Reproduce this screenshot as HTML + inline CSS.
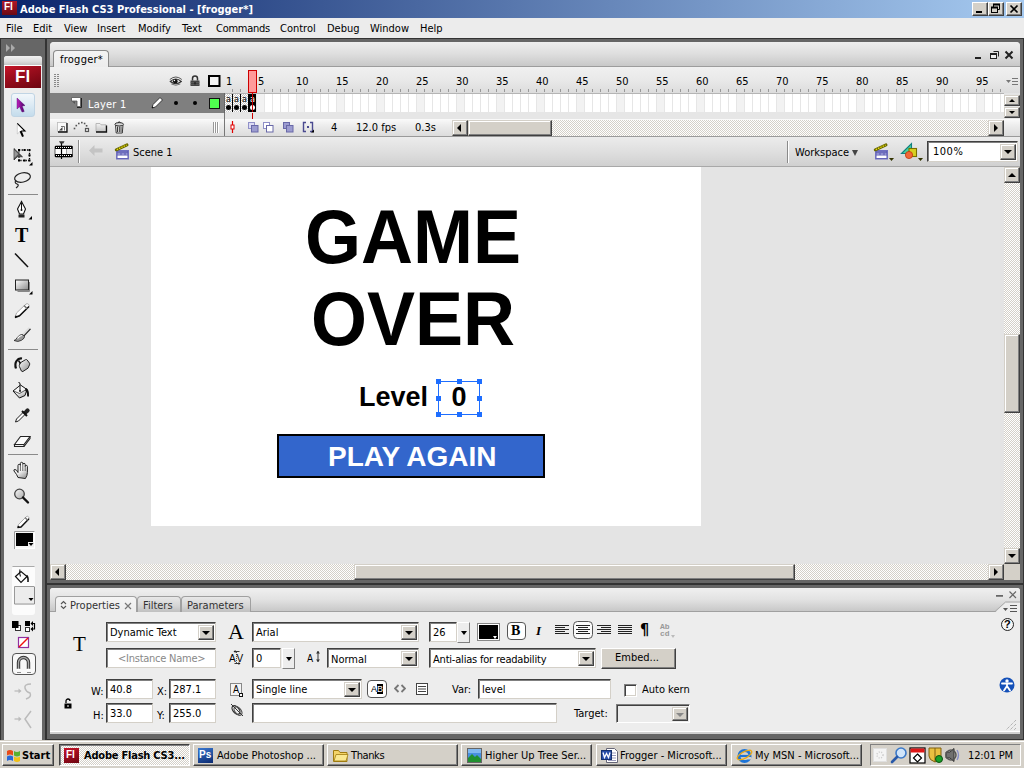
<!DOCTYPE html>
<html>
<head>
<meta charset="utf-8">
<title>Adobe Flash CS3 Professional - [frogger*]</title>
<style>
html,body{margin:0;padding:0;}
body{width:1024px;height:768px;overflow:hidden;position:relative;background:#666;
 font-family:"DejaVu Sans Condensed","Liberation Sans",sans-serif;font-size:11px;color:#000;}
.a{position:absolute;}
.t{position:absolute;white-space:nowrap;line-height:14px;}
/* title bar */
#title{left:0;top:0;width:1024px;height:18px;background:linear-gradient(to right,#0a246a,#a6caf0);}
#title .t{color:#fff;font-weight:bold;font-size:11px;left:20px;top:3px;}
.wbtn{position:absolute;top:2px;width:16px;height:14px;background:#d4d0c8;box-sizing:border-box;border:1px solid;border-color:#fff #404040 #404040 #fff;box-shadow:inset -1px -1px 0 #808080;}
/* menu */
#menu{left:0;top:18px;width:1024px;height:20px;background:#ececec;}
#menu .t{top:4px;}
/* panels */
.panel{background:#ededed;}
.grad{background:linear-gradient(to bottom,#f4f4f4 0%,#e4e4e4 55%,#cfcfcf 100%);}
.input{position:absolute;box-sizing:border-box;background:#fff;border:1px solid;border-color:#404040 #d4d0c8 #d4d0c8 #404040;box-shadow:inset 1px 1px 0 #808080;height:20px;}
.input .t{left:3px;top:3px;}
.ddbtn{position:absolute;right:1px;top:2px;bottom:1px;width:16px;background:#d4d0c8;box-sizing:border-box;border:1px solid;border-color:#d4d0c8 #404040 #404040 #d4d0c8;box-shadow:inset -1px -1px 0 #808080,inset 1px 1px 0 #fff;}
.ddbtn:after{content:"";position:absolute;left:3px;top:5px;border:4px solid transparent;border-top:4px solid #000;border-bottom:none;}
.sbtn{position:absolute;width:16px;height:16px;background:#d4d0c8;box-sizing:border-box;border:1px solid;border-color:#d4d0c8 #404040 #404040 #d4d0c8;box-shadow:inset -1px -1px 0 #808080,inset 1px 1px 0 #fff;}
.track{position:absolute;background:#e9e7e0;background-image:repeating-conic-gradient(#fff 0% 25%,#d4d0c8 0% 50%);background-size:2px 2px;}
.tri{position:absolute;width:0;height:0;border:4px solid transparent;}
.rl{top:33px;font-size:11px;}
.arial{font-family:"Liberation Sans",sans-serif;}
.h{position:absolute;width:5px;height:5px;background:#1e6eff;}
.ptab{height:16px;box-sizing:border-box;background:linear-gradient(#e8e8e8,#d4d4d4 60%,#c0c0c0);border:1px solid #a0a0a0;border-bottom:none;border-radius:4px 4px 0 0;}
.spin{position:absolute;width:13px;height:21px;box-sizing:border-box;background:#ededed;border:1px solid;border-color:#fff #808080 #808080 #fff;}
.spin:after{content:"";position:absolute;left:3px;top:8px;border:3px solid transparent;border-top:4px solid #000;border-bottom:none;}
.ddbtn.dis:after{border-top-color:#888;}
.tb{position:absolute;top:3px;width:131px;height:22px;box-sizing:border-box;background:#d4d0c8;border:1px solid;border-color:#fff #404040 #404040 #fff;box-shadow:inset -1px -1px 0 #808080;overflow:hidden;}
.tb.act{background:#fff;background-image:repeating-conic-gradient(#fff 0% 25%,#d4d0c8 0% 50%);background-size:2px 2px;border-color:#404040 #fff #fff #404040;box-shadow:inset 1px 1px 0 #808080;}
</style>
</head>
<body>
<!-- TITLE BAR -->
<div id="title" class="a">
  <div class="a" style="left:2px;top:1px;width:15px;height:14px;background:linear-gradient(#b01828,#6c0a14);"></div>
  <div class="t" style="left:4px;top:0px;font-size:10px;font-weight:bold;color:#fff;font-family:'Liberation Sans',sans-serif;">Fl</div>
  <div class="t">Adobe Flash CS3 Professional - [frogger*]</div>
  <div class="wbtn" style="left:972px;"><div class="a" style="left:3px;top:8px;width:6px;height:2px;background:#000;"></div></div>
  <div class="wbtn" style="left:988px;"><svg class="a" style="left:0;top:0;" width="14" height="12" viewBox="0 0 14 12"><path d="M4.500 4v-2.500h6v5h-2" fill="none" stroke="#000"/><path d="M4 1.500h7" stroke="#000" stroke-width="2"/><rect x="2.500" y="4.500" width="6" height="5" fill="none" stroke="#000"/><path d="M2 4.500h7" stroke="#000" stroke-width="2"/></svg></div>
  <div class="wbtn" style="left:1006px;"><svg class="a" style="left:0;top:0;" width="14" height="12" viewBox="0 0 14 12"><path d="M3.500 2.500l7 7M10.500 2.500l-7 7" stroke="#000" stroke-width="1.700"/></svg></div>
</div>
<!-- MENU -->
<div id="menu" class="a">
  <div class="t" style="left:6px;">File</div>
  <div class="t" style="left:33px;">Edit</div>
  <div class="t" style="left:64px;">View</div>
  <div class="t" style="left:97px;">Insert</div>
  <div class="t" style="left:138px;">Modify</div>
  <div class="t" style="left:182px;">Text</div>
  <div class="t" style="left:216px;letter-spacing:-.25px;">Commands</div>
  <div class="t" style="left:280px;">Control</div>
  <div class="t" style="left:327px;">Debug</div>
  <div class="t" style="left:370px;">Window</div>
  <div class="t" style="left:420px;">Help</div>
</div>
<!-- TOOLBAR -->
<div id="tools" class="a panel" style="left:4px;top:56px;width:38px;height:684px;border-radius:3px 3px 0 0;overflow:hidden;">
  <div class="a" style="left:0;top:0;width:38px;height:9px;background:linear-gradient(#f2f2f2,#dcdcdc 60%,#c4c4c4);"></div>
  <div class="a" style="left:0;top:9px;width:38px;height:1px;background:#fff;"></div>
  <div class="a" style="left:1px;top:10px;width:36px;height:22px;background:linear-gradient(160deg,#c81428 0%,#a00e1e 35%,#6c0410 100%);"></div>
  <div class="t" style="left:11px;top:10px;font-family:'Liberation Sans',sans-serif;font-weight:bold;font-size:17px;line-height:22px;color:#fff;letter-spacing:0px;">Fl</div>
  <div class="a" style="left:7px;top:37px;width:24px;height:24px;box-sizing:border-box;border:1px solid #c0d4e4;border-radius:3px;background:linear-gradient(#f2f7fb,#dceaf4 50%,#c4dcec);"></div>
  <svg class="a" style="left:0;top:0;" width="38" height="684" viewBox="4 56 38 684">
    <defs>
      <linearGradient id="gm" x1="0" y1="0" x2="1" y2="1"><stop offset="0" stop-color="#fff"/><stop offset="1" stop-color="#8a8a8a"/></linearGradient>
      <linearGradient id="gl" x1="0" y1="0" x2=".6" y2="1"><stop offset="0" stop-color="#fff"/><stop offset=".6" stop-color="#f4f4f4"/><stop offset="1" stop-color="#aaa"/></linearGradient>
      <linearGradient id="gz" x1="0" y1="0" x2="1" y2="1"><stop offset="0" stop-color="#f8f8f8"/><stop offset="1" stop-color="#a8a8a8"/></linearGradient>
      <linearGradient id="gp" x1="0" y1="0" x2="1" y2="0"><stop offset="0" stop-color="#c020c0"/><stop offset="1" stop-color="#400060"/></linearGradient>
    </defs>
    <!-- selection arrow -->
    <path d="M17 98v11l2.500-2.300 2.500 5.300 2.200-.5-2-5.500 2.800-.5z" fill="url(#gp)" stroke="#500070" stroke-width=".4"/>
    <!-- subselection -->
    <path d="M17.300 123.500v10.500l2.700-2.500 5-.5z" fill="#fff" stroke="#aaa" stroke-width=".5"/><path d="M17.300 123.300l7.700 7.700h-3.500" fill="none" stroke="#000" stroke-width="1.100"/><path d="M20.600 131l2.400 5.600" stroke="#000" stroke-width="2"/>
    <!-- free transform -->
    <rect x="19" y="150" width="10.500" height="10.500" fill="none" stroke="#000" stroke-width="1.300" stroke-dasharray="1.300 1.330"/>
    <path d="M18 149h2v2h-2zM23.500 149h2v2h-2zM28.500 149h2v2h-2zM28.500 154.300h2v2h-2zM28.500 159.500h2v2h-2zM23.500 159.500h2v2h-2zM18 159.500h2v2h-2z" fill="#000"/>
    <path d="M14 148.500v11.500l3.200-3.200h5.300z" fill="#555" stroke="#111" stroke-width=".6"/><path d="M14.300 150v8l4-4z" fill="#999"/>
    <path d="M32.500 162v3.500h-3.500z" fill="#000"/>
    <!-- lasso -->
    <ellipse cx="22.500" cy="177.500" rx="8" ry="4.600" transform="rotate(-12 22.500 177.500)" fill="none" stroke="#222" stroke-width="1.200"/>
    <path d="M16 180q-2 3 1 4t-1 4" fill="none" stroke="#222" stroke-width="1.100"/>
    <!-- separators -->
    <path d="M8 194.500h30M8 349.500h30M8 454.500h30" stroke="#8a8a8a"/>
    <!-- pen -->
    <path d="M21.500 201.500l-4 7.500 2 5h4l2-5z" fill="#fff" stroke="#111" stroke-width="1.100"/><path d="M21.500 203v7" stroke="#111"/><circle cx="21.500" cy="210" r="1" fill="#111"/>
    <path d="M18.500 214.500h6v3h-6z" fill="#222"/><path d="M32 216v3.500h-3.500z" fill="#000"/>
    <!-- line -->
    <path d="M15 253.500l13 13.500" stroke="#111" stroke-width="1.500"/>
    <!-- rectangle -->
    <rect x="15.500" y="280" width="13" height="10" fill="url(#gm)" stroke="#222"/><path d="M29.500 282v9.500h-12" fill="none" stroke="#888"/><path d="M32.500 291v3.500h-3.500z" fill="#000"/>
    <!-- pencil -->
    <path d="M15 317.500l1.500-4.500 9.500-9q1.500-.8 2.500.3t.4 2.500l-9.400 9z" fill="#fff" stroke="#999" stroke-width=".8"/>
    <path d="M29 306.500l-9.500 9.300-4.500 1.700" fill="none" stroke="#111" stroke-width="1.500"/><path d="M15 317.500l2.200-.7-1.400-1.600z" fill="#000"/><path d="M24 305.500l3.200 3.200" stroke="#777" stroke-width="1.600"/>
    <!-- brush -->
    <path d="M29.500 328l-7 7.500" stroke="#ddd" stroke-width="2.200"/><path d="M30.500 328.800l-7 7.500" stroke="#222" stroke-width="1.200"/>
    <path d="M22.500 334.500q-3-.3-5 2.800t-3.500 3.200q4 2 7.500-.2t3-4z" fill="#999" stroke="#222" stroke-width=".8"/><path d="M17.500 338.500q2-3 4.500-3" fill="none" stroke="#fff" stroke-width="1.200"/>
    <path d="M8 349.500h30" stroke="#8a8a8a"/>
    <!-- ink bottle -->
    <path d="M20 363l5.500-3.300q1-.5 1.700.3l2.300 3.200q.5.800 0 1.700l-1.500 3.300-5 3.200q-1 .5-1.600-.4l-2-4.500q-.4-1 .4-2.500z" fill="url(#gm)" stroke="#222" stroke-width="1"/>
    <path d="M16 368.500q-1.500-4.500.5-7.500t5.500-2.500" fill="none" stroke="#111" stroke-width="2.200"/><path d="M18.500 360.500l2 3" stroke="#111" stroke-width="1.500"/>
    <!-- paint bucket -->
    <path d="M13 391l7.500-6 6.500 4.500-2 6-5.500 2.500z" fill="url(#gl)" stroke="#111" stroke-width="1"/><path d="M13.500 391l6 2.500 7-4" fill="none" stroke="#333" stroke-width=".8"/>
    <path d="M20 391v-7q0-1.800-1.500-1.500" fill="none" stroke="#111" stroke-width="1"/><circle cx="20" cy="391" r=".9" fill="#111"/>
    <path d="M26 388q3.500 1.500 3 8.500h-1.800q.3-4-2.200-6.500z" fill="#111"/>
    <!-- eyedropper -->
    <path d="M15.500 422l1-3 7.500-7.500 2 2-7.500 7.500z" fill="#fafafa" stroke="#222" stroke-width="1"/><path d="M23 412.500l3-3.500q1.500-1.500 3 0t0 3l-3.500 3z" fill="#222"/><path d="M22 411l5 5" stroke="#111" stroke-width="2"/>
    <!-- eraser -->
    <path d="M14.500 444.500l6-8h9.500l-6 8z" fill="#fafafa" stroke="#222" stroke-width="1.100"/><path d="M14.500 444.500v2h9.500l6-8v-2" fill="none" stroke="#222" stroke-width="1.100"/><path d="M24 444.500v2" stroke="#222"/>
    <!-- hand -->
    <path d="M18 477.500q-1-3-4-6.500q-.6-1.500 1-1.500t3 3v-7q0-1.200 1.200-1.200t1.200 1.200v-2q0-1.200 1.200-1.200t1.200 1.200v1q0-1.200 1.200-1.200t1.200 1.200v2q0-1.100 1.100-1.100t1.100 1.100v6q0 3-2 6z" fill="url(#gl)" stroke="#222" stroke-width="1"/>
    <path d="M20.400 466v5M22.800 465v6M25.200 466.500v4.500" stroke="#444" stroke-width=".8"/>
    <!-- zoom -->
    <circle cx="19.500" cy="494" r="4.800" fill="url(#gz)" stroke="#444" stroke-width="1.300"/><path d="M23 497.500l5 5" stroke="#111" stroke-width="2.400" stroke-linecap="round"/>
    <!-- stroke pencil -->
    <path d="M17.500 527.500l1-3 8-8q1.200-.6 2 .3t.4 2.200l-8 8z" fill="#fff" stroke="#999" stroke-width=".8"/><path d="M29 518.700l-8 8.300-3.500.5" fill="none" stroke="#111" stroke-width="1.400"/><path d="M17.500 527.500l2-.5-1.500-1.500z" fill="#000"/><path d="M25 517.500l2.700 2.700" stroke="#777" stroke-width="1.400"/>
    <!-- stroke swatch -->
    <rect x="14.500" y="531.500" width="20" height="17" fill="#f8f8f8" stroke="#fff"/><path d="M14.500 549v-17.500h20" fill="none" stroke="#999"/>
    <rect x="16" y="533" width="17" height="13" fill="#000"/><rect x="28" y="542" width="6" height="5" fill="#f0f0f0"/><path d="M28.500 543h5l-2.500 3z" fill="#000"/>
    <!-- fill area -->
    <rect x="12" y="566" width="23" height="49" rx="3" fill="#fcfcfc"/><path d="M12.500 566.500h22" stroke="#aaa"/>
    <path d="M15.500 576.500l5.500-5 6 5-6 6z" fill="#fff" stroke="#111" stroke-width="1.200"/><path d="M20 569.500q-1 3 .5 7" fill="none" stroke="#111" stroke-width="1.100"/><path d="M26.500 575.500q2 1.500 1.500 6.500" fill="none" stroke="#111" stroke-width="1.600"/>
    <rect x="14.500" y="586.500" width="20" height="17" fill="#ececec" stroke="#fff"/><path d="M14.500 604v-17.500h20" fill="none" stroke="#999"/><path d="M34.500 587v17h-20" fill="none" stroke="#888"/>
    <path d="M28.500 598h5l-2.500 3z" fill="#000"/>
    <!-- b/w, swap -->
    <rect x="15.500" y="625.500" width="5" height="5" fill="#fff" stroke="#333"/><rect x="12" y="621" width="6.500" height="7" fill="#000"/>
    <rect x="25" y="621" width="5" height="5" fill="#000"/><rect x="25.500" y="627.500" width="4" height="4" fill="#fff" stroke="#333"/>
    <path d="M31.500 623.500h3v5.500h-3" fill="none" stroke="#000" stroke-width="1.200"/><path d="M33 621l-2.500 2.500 2.500 2.500zM33 626.500l-2.500 2.500 2.500 2.500z" fill="#000"/>
    <!-- no color -->
    <rect x="18.500" y="637.500" width="10" height="10" fill="#fff" stroke="#9030a0" stroke-width="1.200"/><path d="M19 647l9-9" stroke="#f01010" stroke-width="1.500"/>
    <!-- magnet button -->
    <rect x="12.500" y="653.500" width="23" height="21" rx="3.500" fill="#f8f8f8" stroke="#555"/>
    <path d="M18.500 669v-6.500a5 5 0 0 1 10 0v6.500" fill="none" stroke="#333" stroke-width="3.400"/><path d="M18.500 669v-6.500a5 5 0 0 1 10 0v6.500" fill="none" stroke="#aaa" stroke-width="1.400"/>
    <path d="M16.800 669.500h3.400M26.800 669.500h3.400" stroke="#fff" stroke-width="1.500"/><path d="M17.500 672.500h1M19.500 672.500h1M27.500 672.500h1M29.500 672.500h1" stroke="#222"/>
    <!-- smooth -->
    <path d="M14.500 691h6" stroke="#bbb" stroke-width="1.300"/><path d="M18.500 688.500l3 2.500-3 2.500z" fill="#bbb"/><path d="M31 684q-7 0-6 4t5 5q2 4-4 6" fill="none" stroke="#bbb" stroke-width="1.500"/>
    <!-- straighten -->
    <path d="M14.500 719h6" stroke="#bbb" stroke-width="1.300"/><path d="M18.500 716.500l3 2.500-3 2.500z" fill="#bbb"/><path d="M31 711l-6 8 6 9" fill="none" stroke="#bbb" stroke-width="1.500"/>
  </svg>
  <div class="t" style="left:11px;top:168px;font-family:'Liberation Serif',serif;font-weight:bold;font-size:20px;line-height:22px;">T</div>
</div>
<!-- dock chrome -->
<svg class="a" style="left:6px;top:44px;" width="10" height="8" viewBox="0 0 10 8"><path d="M0 0l4 4-4 4zM5 0l4 4-4 4z" fill="#aaa"/></svg>
<div class="a" style="left:0;top:38px;width:1024px;height:1px;background:#333;"></div>
<div class="a" style="left:0;top:38px;width:1px;height:702px;background:#333;"></div>
<div class="a" style="left:45px;top:39px;width:2px;height:701px;background:#333;"></div>
<div class="a" style="left:1023px;top:38px;width:1px;height:702px;background:#333;"></div>
<div class="a" style="left:47px;top:583px;width:976px;height:2px;background:#333;"></div>
<div class="a" style="left:47px;top:739px;width:976px;height:1px;background:#333;"></div>
<!-- DOC WINDOW -->
<div id="doc" class="a" style="left:50px;top:42px;width:970px;height:538px;background:#e4e4e4;border-radius:4px 4px 0 0;overflow:hidden;">
  <!-- tab bar -->
  <div class="a" style="left:0;top:0;width:970px;height:24px;background:linear-gradient(#eeeeee,#dedede 50%,#c8c8c8);border-bottom:1px solid #9c9c9c;"></div>
  <div class="a" style="left:3px;top:8px;width:56px;height:17px;box-sizing:border-box;background:linear-gradient(#f4f4f4,#ececec);border:1px solid #8a8a8a;border-bottom:none;border-radius:4px 4px 0 0;"></div>
  <div class="t" style="left:10px;top:11px;letter-spacing:.25px;">frogger*</div>
  <!-- doc window controls -->
  <svg class="a" style="left:920px;top:6px;" width="48" height="14" viewBox="0 0 48 14">
    <rect x="5" y="9" width="6" height="2" fill="#222"/>
    <path d="M23.5 3.500h5v5" fill="none" stroke="#222" stroke-width="1"/><rect x="20.500" y="5.500" width="6" height="5" fill="#eee" stroke="#222"/><rect x="20" y="5" width="7" height="2" fill="#222"/>
    <path d="M35.500 3.500l7 7M42.500 3.500l-7 7" stroke="#222" stroke-width="2"/>
  </svg>
  <!-- timeline header -->
  <div class="a" style="left:0;top:25px;width:970px;height:26px;background:linear-gradient(#f0f0f0,#e9e9e9 50%,#dcdcdc);"></div>
  <div class="a" style="left:4px;top:32px;width:2px;height:14px;background:repeating-linear-gradient(#888 0 1px,transparent 1px 2px);"></div>
  <div class="a" style="left:7px;top:32px;width:2px;height:14px;background:repeating-linear-gradient(#888 0 1px,transparent 1px 2px);"></div>
  <!-- eye, lock, outline icons -->
  <svg class="a" style="left:118px;top:32px;" width="54" height="15" viewBox="0 0 54 15">
    <g transform="translate(1.300 1.500)"><path d="M1 6Q6.500 1 12 6Q6.500 10.500 1 6z" fill="#e4e4e4" stroke="#333" stroke-width="1.100"/><circle cx="6" cy="5.800" r="2.300" fill="#111"/><circle cx="5.200" cy="5" r=".7" fill="#fff"/>
    <path d="M.5 4Q6.500 -1 12.500 4" fill="none" stroke="#555" stroke-width="1"/><path d="M2 8.500Q6.500 11 11 8.500" fill="none" stroke="#555" stroke-width=".8"/></g>
    <path d="M24.500 6.500v-2a2.500 2.500 0 0 1 5 0v2" fill="none" stroke="#333" stroke-width="1.500"/><rect x="22.500" y="6.500" width="9" height="5.500" fill="#444"/><path d="M22.500 8.500h9M22.500 10.500h9" stroke="#666" stroke-width=".6"/><rect x="26.500" y="8" width="1" height="2.500" fill="#111"/>
    <rect x="41" y="2" width="10.500" height="10" fill="#f4f4f4" stroke="#000" stroke-width="2"/>
  </svg>
  <!-- ruler -->
  <div class="t rl" style="left:176px;">1</div><div class="t rl" style="left:208px;">5</div><div class="t rl" style="left:246px;">10</div><div class="t rl" style="left:286px;">15</div><div class="t rl" style="left:326px;">20</div><div class="t rl" style="left:366px;">25</div><div class="t rl" style="left:406px;">30</div><div class="t rl" style="left:446px;">35</div><div class="t rl" style="left:486px;">40</div><div class="t rl" style="left:526px;">45</div><div class="t rl" style="left:566px;">50</div><div class="t rl" style="left:606px;">55</div><div class="t rl" style="left:646px;">60</div><div class="t rl" style="left:686px;">65</div><div class="t rl" style="left:726px;">70</div><div class="t rl" style="left:766px;">75</div><div class="t rl" style="left:806px;">80</div><div class="t rl" style="left:846px;">85</div><div class="t rl" style="left:886px;">90</div><div class="t rl" style="left:926px;">95</div>
  <div class="a" style="left:175px;top:47px;width:779px;height:3px;background:repeating-linear-gradient(to right,transparent 0 7px,#999 7px 8px);"></div>
  <div class="a" style="left:175px;top:51px;width:779px;height:1px;background:#b4b4b4;"></div>
  <!-- playhead -->
  <div class="a" style="left:198px;top:28px;width:9px;height:23px;box-sizing:border-box;background:#ff9a9a;border:1px solid #cc0000;"></div>
  <!-- layer row -->
  <div class="a" style="left:0;top:51px;width:174px;height:20px;background:#7f7f7f;"></div>
  <svg class="a" style="left:21px;top:55px;" width="12" height="12" viewBox="0 0 12 12"><path d="M.5 .5h9v9h-3.500v-5.500h-5.500z" fill="#fff" stroke="#555" stroke-width=".8"/><path d="M10.500 1v9.500h-4.500" stroke="#222" fill="none"/><path d="M1 4.500l3 2.500v-2.500z" fill="#555"/></svg>
  <div class="t" style="left:38px;top:56px;color:#fff;letter-spacing:.2px;">Layer 1</div>
  <svg class="a" style="left:100px;top:54px;" width="14" height="14" viewBox="0 0 14 14"><path d="M2 12l1-3.500 7-7 2.500 2.500-7 7z" fill="#fff" stroke="#333" stroke-width="1"/><path d="M2 12l1.500-.4-1-1z" fill="#000"/></svg>
  <div class="a" style="left:124px;top:59px;width:4px;height:4px;border-radius:2px;background:#000;"></div>
  <div class="a" style="left:143px;top:59px;width:4px;height:4px;border-radius:2px;background:#000;"></div>
  <div class="a" style="left:159px;top:56px;width:11px;height:11px;box-sizing:border-box;background:#4fff4f;border:1px solid #111;"></div>
  <div class="a" style="left:174px;top:51px;width:1px;height:43px;background:#666;"></div>
  <!-- frames -->
  <div class="a" style="left:175px;top:52px;width:779px;height:18px;background:#fff;background-image:repeating-linear-gradient(to right,transparent 0 7px,#e6e6e6 7px 8px),repeating-linear-gradient(to right,transparent 0 32px,#f2f2f2 32px 40px);"></div>
  <div class="a" style="left:175px;top:52px;width:24px;height:19px;box-sizing:border-box;border-bottom:1px solid #000;background:#fff;background-image:repeating-conic-gradient(#fff 0% 25%,#c8c8c8 0% 50%);background-size:2px 2px;"></div>
  <div class="a" style="left:198px;top:52px;width:8px;height:19px;background:#000;"></div>
  <div class="a" style="left:182px;top:52px;width:1px;height:19px;background:#000;"></div>
  <div class="a" style="left:190px;top:52px;width:1px;height:19px;background:#000;"></div>
  <div class="a" style="left:198px;top:52px;width:1px;height:19px;background:#000;"></div>
  <div class="t" style="left:176px;top:51px;font-size:9px;line-height:12px;">a</div>
  <div class="t" style="left:184px;top:51px;font-size:9px;line-height:12px;">a</div>
  <div class="t" style="left:192px;top:51px;font-size:9px;line-height:12px;">a</div>
  <div class="t" style="left:200px;top:51px;font-size:9px;line-height:12px;color:#fff;">a</div>
  <div class="a" style="left:176px;top:63px;width:5px;height:5px;border-radius:3px;background:#000;"></div>
  <div class="a" style="left:184px;top:63px;width:5px;height:5px;border-radius:3px;background:#000;"></div>
  <div class="a" style="left:192px;top:63px;width:5px;height:5px;border-radius:3px;background:#000;"></div>
  <div class="a" style="left:200px;top:63px;width:5px;height:5px;border-radius:3px;background:#fff;"></div>
  <div class="a" style="left:202px;top:51px;width:1px;height:26px;background:#cc0000;"></div>
  <!-- timeline v scroll -->
  <div class="a" style="left:954px;top:51px;width:16px;height:26px;background:#e4e4e4;"></div>
  <div class="sbtn" style="left:954px;top:53px;height:11px;z-index:2;"><div class="tri" style="left:4px;top:0px;border-width:3px;border-bottom-color:#000;"></div></div>
  <div class="sbtn" style="left:954px;top:65px;height:11px;z-index:2;"><div class="tri" style="left:4px;top:3px;border-width:3px;border-top-color:#000;"></div></div>
  <svg class="a" style="left:954px;top:35px;" width="16" height="9" viewBox="0 0 16 9"><path d="M2 3h5l-2.500 3z" fill="#777"/><path d="M8 1.500h6M8 4.500h6M8 7.500h6" stroke="#777"/></svg>
  <!-- gap + bottom row -->
  <div class="a" style="left:175px;top:70px;width:795px;height:7px;background:#e6e6e6;"></div><div class="a" style="left:0;top:71px;width:175px;height:6px;background:#e9e9e9;"></div>
  <div class="a" style="left:0;top:77px;width:970px;height:17px;background:linear-gradient(#fafafa,#ececec 40%,#dcdcdc);"></div>
  <div class="a" style="left:0;top:94px;width:970px;height:1px;background:#9a9a9a;"></div>
  <div class="a" style="left:174px;top:71px;width:1px;height:23px;background:#777;"></div>
  <div class="a" style="left:202px;top:71px;width:1px;height:6px;background:#cc0000;"></div>
  <!-- layer bottom icons -->
  <svg class="a" style="left:6px;top:79px;" width="72" height="14" viewBox="0 0 72 14">
    <rect x="1.500" y="1.500" width="9" height="9" fill="#fafafa" stroke="#bbb" stroke-width=".8"/><path d="M11 2v9h-9" stroke="#111" stroke-width="1.300" fill="none"/><path d="M3 9.500l3.500-3.500v3.500z" fill="#444"/><path d="M5 5.500h3.500v4" fill="none" stroke="#666" stroke-width=".9"/>
    <rect x="17.7" y="6.7" width="1.600" height="1.600" fill="#555"/><rect x="19.5" y="3.8" width="1.600" height="1.600" fill="#555"/><rect x="22.0" y="1.7" width="1.600" height="1.600" fill="#555"/><rect x="25.0" y="0.8" width="1.600" height="1.600" fill="#555"/><rect x="27.8" y="1.7" width="1.600" height="1.600" fill="#555"/><rect x="29.8" y="4.0" width="1.600" height="1.600" fill="#555"/><rect x="29.500" y="7.500" width="3" height="3" fill="#eee" stroke="#555" stroke-width="1.200"/>
    <path d="M40 10.500v-8h4l1 1.300h5v6.700z" fill="url(#gf)" stroke="#aaa" stroke-width=".8"/><path d="M50.500 4.500v6.500h-10.500" stroke="#111" stroke-width="1.300" fill="none"/>
    <path d="M59.500 4h7.500l-.7 8h-6.100z" fill="#f4f4f4" stroke="#222" stroke-width=".9"/><ellipse cx="63.200" cy="3.300" rx="4.300" ry="1.700" fill="#d8d8d8" stroke="#222" stroke-width=".9"/><path d="M61.500 5.500v5.500M63.300 5.500v5.500M65 5.500v5.500" stroke="#222" stroke-width=".9"/><path d="M62 1.500q1.200-1.200 2.500 0" fill="none" stroke="#222" stroke-width=".9"/>
    <defs><linearGradient id="gf" x1="0" y1="0" x2="0" y2="1"><stop offset="0" stop-color="#f4f4f4"/><stop offset="1" stop-color="#c4c4c4"/></linearGradient></defs>
  </svg>
  <div class="a" style="left:163px;top:80px;width:6px;height:11px;background:repeating-linear-gradient(to right,#999 0 1px,#fff 1px 2px);"></div>
  <!-- onion icons -->
  <svg class="a" style="left:178px;top:78px;" width="90" height="16" viewBox="0 0 90 16">
    <path d="M4.500 1v12" stroke="#e00000" stroke-width="1.200"/><rect x="3" y="5" width="3" height="4" fill="#fff" stroke="#e00000"/>
    <rect x="20.500" y="2.500" width="6" height="6" fill="#dcdcf4" stroke="#9090c8"/><rect x="23.500" y="5.500" width="6.500" height="6.500" fill="#9c9cd0" stroke="#6868a8"/>
    <rect x="35.500" y="2.500" width="6" height="6" fill="#fff" stroke="#9090c8"/><rect x="38.500" y="5.500" width="6.500" height="6.500" fill="#fff" stroke="#6868a8"/>
    <rect x="55.500" y="2.500" width="6" height="6" fill="#9c9cd0" stroke="#6868a8"/><rect x="58.500" y="5.500" width="6.500" height="6.500" fill="#9c9cd0" stroke="#6868a8"/>
    <path d="M78 2.500h-2.500v9h2.500M82 2.500h2.500v9h-2.500" fill="none" stroke="#4a4a90" stroke-width="1.400"/><rect x="79" y="6" width="2" height="2" fill="#4a4a90"/><path d="M86 12.500v-3l-3 3z" fill="#000"/>
  </svg>
  <div class="t" style="left:281px;top:79px;">4</div>
  <div class="t" style="left:306px;top:79px;">12.0 fps</div>
  <div class="t" style="left:365px;top:79px;">0.3s</div>
  <!-- timeline h scroll -->
  <div class="track" style="left:402px;top:78px;width:552px;height:16px;"></div>
  <div class="sbtn" style="left:402px;top:78px;"><div class="tri" style="left:0px;top:3px;border-right-color:#000;"></div></div>
  <div class="sbtn" style="left:418px;top:78px;width:84px;"></div>
  <div class="sbtn" style="left:938px;top:78px;"><div class="tri" style="left:5px;top:3px;border-left-color:#000;"></div></div>
  <!-- edit bar -->
  <div class="a" style="left:0;top:95px;width:970px;height:29px;background:linear-gradient(#ececec,#dfdfdf 50%,#d0d0d0);"></div>
  <div class="a" style="left:0;top:124px;width:970px;height:1px;background:#a8a8a8;"></div>
  <svg class="a" style="left:4px;top:98px;" width="20" height="20" viewBox="0 0 20 20">
    <rect x="1" y="6" width="17.500" height="11" rx="1" fill="#fff" stroke="#000" stroke-width=".6"/><rect x="1" y="6" width="17.500" height="3" fill="#000"/><rect x="1" y="14" width="17.500" height="3" fill="#000"/>
    <path d="M2 7.500h16M2 15.500h16" stroke="#fff" stroke-width="1" stroke-dasharray="1 1"/><path d="M12.500 9v5" stroke="#888" stroke-width=".8"/><rect x="13" y="9.200" width="5" height="4.600" fill="#ececec"/>
    <path d="M7.500 2v17" stroke="#000" stroke-width="1.200"/><path d="M5 1.200h5.500l-1.200 2.300h-3z" fill="#333"/>
  </svg>
  <div class="a" style="left:28px;top:98px;width:1px;height:23px;background:#8a8a8a;"></div><div class="a" style="left:29px;top:98px;width:1px;height:23px;background:#fff;"></div>
  <svg class="a" style="left:39px;top:103px;" width="14" height="11" viewBox="0 0 14 11"><path d="M0 5.500l5.500-5.500v3.500h8v4h-8v3.500z" fill="#c4c4c4"/></svg>
  <svg class="a" style="left:64px;top:100px;" width="17" height="18" viewBox="0 0 17 18">
    <rect x="2.500" y="8.500" width="12" height="8.500" fill="#5858b0" stroke="#7070c0" stroke-width="1"/><path d="M3.500 10h10" stroke="#9090d0" stroke-width=".8"/><path d="M3.500 12h10" stroke="#c8c8f0" stroke-width="1" stroke-dasharray="3 1"/><rect x="3.500" y="13.500" width="10" height="2.500" fill="#fff"/>
    <path d="M2.300 7.800l10.700-5" stroke="#6a6a00" stroke-width="3" stroke-linecap="round"/><path d="M2.800 7.600l9.800-4.600" stroke="#f0e010" stroke-width="1.300" stroke-dasharray="1.400 1.100"/>
  </svg>
  <div class="t" style="left:83px;top:104px;">Scene 1</div>
  <!-- right of edit bar -->
  <div class="a" style="left:737px;top:99px;width:1px;height:22px;background:#8a8a8a;"></div><div class="a" style="left:738px;top:99px;width:1px;height:22px;background:#fff;"></div>
  <div class="t" style="left:745px;top:104px;">Workspace</div>
  <div class="tri" style="left:802px;top:108px;border-top-color:#444;border-width:6px 3.500px 0 3.500px;"></div>
  <svg class="a" style="left:823px;top:100px;" width="22" height="19" viewBox="0 0 22 19">
    <rect x="2.500" y="8.500" width="12" height="8.500" fill="#5858b0" stroke="#7070c0" stroke-width="1"/><path d="M3.500 10h10" stroke="#9090d0" stroke-width=".8"/><path d="M3.500 12h10" stroke="#c8c8f0" stroke-width="1" stroke-dasharray="3 1"/><rect x="3.500" y="13.500" width="10" height="2.500" fill="#fff"/>
    <path d="M2.300 7.800l10.700-5" stroke="#6a6a00" stroke-width="3" stroke-linecap="round"/><path d="M2.800 7.600l9.800-4.600" stroke="#f0e010" stroke-width="1.300" stroke-dasharray="1.400 1.100"/><path d="M16 16h5l-2.500 3z" fill="#333300"/>
  </svg>
  <svg class="a" style="left:850px;top:100px;" width="24" height="19" viewBox="0 0 24 19">
    <path d="M1.500 11.500l10-10v10z" fill="#48d0a0" stroke="#108080" stroke-width="1.100"/><rect x="9" y="6.500" width="7.500" height="8" fill="#d8d020" stroke="#787000" stroke-width="1.100"/><circle cx="9" cy="13" r="3.600" fill="#f06838" stroke="#c03808" stroke-width=".8"/><path d="M18 16h5l-2.500 3z" fill="#333300"/>
  </svg>
  <div class="input" style="left:877px;top:99px;width:91px;height:21px;"><div class="t" style="left:5px;top:3px;letter-spacing:.5px;">100%</div><div class="ddbtn"></div></div>
  <!-- stage -->
  <div class="a" style="left:101px;top:125px;width:550px;height:359px;background:#fff;"></div>
  <div class="t arial" style="left:255px;top:151px;font-size:72px;line-height:82px;font-weight:bold;transform:scaleY(1.06);transform-origin:0 0;">GAME</div>
  <div class="t arial" style="left:261px;top:233px;font-size:72px;line-height:82px;font-weight:bold;transform:scaleY(1.06);transform-origin:0 0;">OVER</div>
  <div class="t arial" style="left:309px;top:340px;font-size:27px;line-height:31px;font-weight:bold;">Level</div>
  <div class="t arial" style="left:388px;width:42px;text-align:center;top:340px;font-size:27px;line-height:31px;font-weight:bold;">0</div>
  <div class="a" style="left:388px;top:339px;width:42px;height:34px;box-sizing:border-box;border:1px solid #1e6eff;"></div>
  <div class="h" style="left:386px;top:337px;"></div><div class="h" style="left:407px;top:337px;"></div><div class="h" style="left:427px;top:337px;"></div>
  <div class="h" style="left:386px;top:354px;"></div><div class="h" style="left:427px;top:354px;"></div>
  <div class="h" style="left:386px;top:370px;"></div><div class="h" style="left:407px;top:370px;"></div><div class="h" style="left:427px;top:370px;"></div>
  <div class="a" style="left:227px;top:392px;width:268px;height:44px;box-sizing:border-box;border:2px solid #000;background:#3366cc;"></div>
  <div class="t arial" style="left:278px;top:399px;font-size:28px;line-height:32px;font-weight:bold;color:#fff;">PLAY AGAIN</div>
  <!-- stage scrollbars -->
  <div class="track" style="left:954px;top:125px;width:16px;height:397px;"></div>
  <div class="sbtn" style="left:954px;top:125px;"><div class="tri" style="left:3px;top:1px;border-bottom-color:#000;"></div></div>
  <div class="sbtn" style="left:954px;top:292px;height:79px;"></div>
  <div class="sbtn" style="left:954px;top:506px;"><div class="tri" style="left:3px;top:5px;border-top-color:#000;"></div></div>
  <div class="track" style="left:0;top:522px;width:954px;height:16px;"></div>
  <div class="sbtn" style="left:0px;top:522px;"><div class="tri" style="left:0px;top:3px;border-right-color:#000;"></div></div>
  <div class="sbtn" style="left:304px;top:522px;width:441px;"></div>
  <div class="sbtn" style="left:938px;top:522px;"><div class="tri" style="left:5px;top:3px;border-left-color:#000;"></div></div>
  <div class="a" style="left:954px;top:522px;width:16px;height:16px;background:#d4d0c8;"></div>
</div>
<!-- PROPERTIES -->
<div id="props" class="a panel" style="left:50px;top:588px;width:970px;height:146px;border-radius:3px 3px 0 0;overflow:hidden;">
  <div class="a" style="left:0;top:0;width:970px;height:23px;background:linear-gradient(#f0f0f0,#e2e2e2 50%,#c8c8c8);border-bottom:1px solid #a0a0a0;"></div>
  <!-- tabs -->
  <div class="a ptab" style="left:87px;top:8px;width:44px;"></div>
  <div class="a ptab" style="left:131px;top:8px;width:70px;"></div>
  <div class="a" style="left:5px;top:8px;width:82px;height:16px;box-sizing:border-box;background:linear-gradient(#f4f4f4,#ededed);border:1px solid #a0a0a0;border-bottom:none;border-radius:4px 4px 0 0;"></div>
  <svg class="a" style="left:10px;top:12px;" width="7" height="10" viewBox="0 0 7 10"><path d="M1 4l2.500-2.500 2.500 2.500M1 6l2.500 2.500 2.500-2.500" fill="none" stroke="#555" stroke-width="1.100"/></svg>
  <div class="t" style="left:20px;top:11px;color:#333;">Properties</div>
  <svg class="a" style="left:74px;top:14px;" width="8" height="8" viewBox="0 0 8 8"><path d="M1 1l6 6M7 1l-6 6" stroke="#777" stroke-width="1.200"/></svg>
  <div class="t" style="left:93px;top:11px;color:#333;">Filters</div>
  <div class="t" style="left:137px;top:11px;color:#333;">Parameters</div>
  <!-- panel controls -->
  <svg class="a" style="left:940px;top:0px;" width="30" height="25" viewBox="940 0 30 25">
    <path d="M946 7.800h7" stroke="#666" stroke-width="1.700"/><path d="M959.500 3.500l6.500 6.500M966 3.500l-6.500 6.500" stroke="#666" stroke-width="1.100"/>
    <path d="M945 24.500l10.500-10h15v10.500z" fill="#ededed"/><path d="M945 23.500l10.500-9.500h15" fill="none" stroke="#a8a8a8"/>
    <path d="M953 20h5l-2.500 3z" fill="#555"/><path d="M960 17.500h7M960 20.500h7M960 23.500h7" stroke="#555" stroke-width="1.200"/>
  </svg>
  <!-- T icon -->
  <div class="t" style="left:23px;top:44px;font-family:'Liberation Serif',serif;font-size:21px;line-height:24px;">T</div>
  <!-- row 1 -->
  <div class="input" style="left:56px;top:34px;width:110px;"><div class="t">Dynamic Text</div><div class="ddbtn"></div></div>
  <div class="t" style="left:178px;top:32px;font-family:'Liberation Serif',serif;font-size:22px;line-height:24px;">A</div>
  <div class="input" style="left:202px;top:34px;width:167px;"><div class="t">Arial</div><div class="ddbtn"></div></div>
  <div class="input" style="left:379px;top:34px;width:28px;"><div class="t">26</div></div>
  <div class="spin" style="left:407px;top:34px;"></div>
  <div class="a" style="left:428px;top:36px;width:21px;height:16px;box-sizing:border-box;background:#000;border:1px solid #fff;outline:1px solid #888;"></div>
  <div class="tri" style="left:443px;top:48px;border-width:3px 2.500px 0 2.500px;border-top-color:#fff;"></div>
  <div class="a" style="left:457px;top:34px;width:19px;height:18px;box-sizing:border-box;border:1px solid #555;border-radius:4px;background:#fff;"></div>
  <div class="t" style="left:461px;top:36px;font-family:'Liberation Serif',serif;font-weight:bold;font-size:14px;">B</div>
  <div class="t" style="left:486px;top:36px;font-family:'Liberation Serif',serif;font-weight:bold;font-style:italic;font-size:13px;">I</div>
  <!-- align icons -->
  <svg class="a" style="left:503px;top:33px;" width="125" height="20" viewBox="0 0 125 20">
    <path d="M2 4.5h14M2 6.5h10M2 8.5h14M2 10.5h10M2 12.5h14" stroke="#222" stroke-width="1"/>
    <rect x="20.500" y="0.500" width="19" height="17" rx="4" fill="#fafafa" stroke="#555"/>
    <path d="M23 4.5h14M25 6.5h10M23 8.5h14M25 10.5h10M23 12.5h14" stroke="#222" stroke-width="1"/>
    <path d="M44 4.5h14M48 6.5h10M44 8.5h14M48 10.5h10M44 12.5h14" stroke="#222" stroke-width="1"/>
    <path d="M65 4.5h14M65 6.5h14M65 8.5h14M65 10.5h14M65 12.5h14" stroke="#222" stroke-width="1"/>
  </svg>
  <div class="t" style="left:590px;top:33px;font-size:16px;line-height:18px;font-weight:bold;">&#182;</div>
  <div class="t" style="left:610px;top:35px;font-size:8px;line-height:7px;color:#999;font-family:'Liberation Mono',monospace;font-weight:bold;">Ab<br>cd</div><div class="tri" style="left:621px;top:47px;border-width:3px 2.500px 0 2.500px;border-top-color:#bbb;"></div>
  <!-- row 2 -->
  <div class="input" style="left:56px;top:60px;width:110px;"><div class="t" style="left:11px;color:#888;letter-spacing:-.25px;">&lt;Instance Name&gt;</div></div>
  <svg class="a" style="left:178px;top:60px;" width="18" height="20" viewBox="0 0 18 20"><path d="M8.500 4v12" fill="none" stroke="#555" stroke-dasharray="1 1"/><path d="M6 3.500h5.500M6.500 15.500h5.500" stroke="#222" stroke-width=".9"/><path d="M7.500 2l-2 1.500 2 1.500zM10.500 14l2 1.500-2 1.500z" fill="#222"/></svg>
  <div class="t" style="left:179px;top:64px;font-size:10px;letter-spacing:1.500px;font-family:'Liberation Sans',sans-serif;">AV</div>
  <div class="input" style="left:202px;top:60px;width:29px;"><div class="t">0</div></div>
  <div class="spin" style="left:232px;top:60px;"></div>
  <div class="t" style="left:257px;top:64px;font-size:10px;">A</div>
  <svg class="a" style="left:265px;top:62px;" width="6" height="14" viewBox="0 0 6 14"><path d="M3 1v11" stroke="#333"/><path d="M1 3.500l2-2.500 2 2.500zM1 9.500l2 2.500 2-2.500z" fill="#333"/></svg>
  <div class="input" style="left:277px;top:60px;width:92px;"><div class="t" style="top:4px;">Normal</div><div class="ddbtn"></div></div>
  <div class="input" style="left:379px;top:60px;width:167px;"><div class="t" style="top:4px;letter-spacing:-.2px;">Anti-alias for readability</div><div class="ddbtn"></div></div>
  <div class="a" style="left:551px;top:60px;width:75px;height:21px;box-sizing:border-box;background:#d4d0c8;border:1px solid;border-color:#fff #404040 #404040 #fff;box-shadow:inset -1px -1px 0 #808080;"></div>
  <div class="t" style="left:565px;top:63px;">Embed...</div>
  <!-- row 3 -->
  <div class="t" style="left:41px;top:97px;">W:</div>
  <div class="input" style="left:56px;top:91px;width:47px;"><div class="t">40.8</div></div>
  <div class="t" style="left:107px;top:97px;">X:</div>
  <div class="input" style="left:119px;top:91px;width:47px;"><div class="t">287.1</div></div>
  <svg class="a" style="left:180px;top:95px;" width="15" height="16" viewBox="0 0 15 16"><rect x="0.500" y="0.500" width="11" height="12" fill="#f4f4f4" stroke="#888"/><rect x="9.500" y="10.500" width="3" height="3" fill="#fff" stroke="#111"/></svg>
  <div class="t" style="left:183px;top:95px;font-size:10px;">A</div>
  <div class="input" style="left:202px;top:91px;width:110px;"><div class="t">Single line</div><div class="ddbtn"></div></div>
  <div class="a" style="left:317px;top:92px;width:20px;height:18px;box-sizing:border-box;border:1px solid #555;border-radius:4px;background:#fff;"></div>
  <div class="a" style="left:327px;top:96px;width:6px;height:10px;background:#000;"></div><div class="t" style="left:321px;top:94px;font-size:9px;font-family:'Liberation Sans',sans-serif;">A<span style="color:#fff;">B</span></div>
  <svg class="a" style="left:344px;top:96px;" width="12" height="9" viewBox="0 0 12 9"><path d="M4.500 1l-3.500 3.500 3.500 3.500M7.500 1l3.500 3.500-3.500 3.500" fill="none" stroke="#777" stroke-width="1.800"/></svg>
  <svg class="a" style="left:366px;top:95px;" width="12" height="13" viewBox="0 0 12 13"><rect x="0.500" y="0.500" width="11" height="11" fill="#fff" stroke="#444"/><path d="M2 3.500h8M2 6h8M2 8.500h8" stroke="#444"/></svg>
  <div class="t" style="left:402px;top:95px;">Var:</div>
  <div class="input" style="left:428px;top:91px;width:133px;"><div class="t">level</div></div>
  <div class="a" style="left:574px;top:96px;width:13px;height:13px;box-sizing:border-box;background:#fff;border:1px solid;border-color:#808080 #fff #fff #808080;box-shadow:inset 1px 1px 0 #404040,inset -1px -1px 0 #d4d0c8;"></div>
  <div class="t" style="left:592px;top:95px;">Auto kern</div>
  <!-- row 4 -->
  <svg class="a" style="left:14px;top:110px;" width="9" height="12" viewBox="0 0 9 12"><rect x="0.500" y="5.500" width="7" height="5" fill="#000"/><path d="M2 5v-2a2 2 0 0 1 4 0" fill="none" stroke="#000" stroke-width="1.300"/><rect x="3.500" y="7" width="1" height="2" fill="#fff"/></svg>
  <div class="t" style="left:43px;top:121px;">H:</div>
  <div class="input" style="left:56px;top:115px;width:47px;"><div class="t">33.0</div></div>
  <div class="t" style="left:107px;top:121px;">Y:</div>
  <div class="input" style="left:119px;top:115px;width:47px;"><div class="t">255.0</div></div>
  <svg class="a" style="left:180px;top:115px;" width="15" height="15" viewBox="0 0 15 15"><ellipse cx="6" cy="7" rx="3" ry="5" transform="rotate(-40 6 7)" fill="none" stroke="#333" stroke-width="1.300"/><ellipse cx="8" cy="8" rx="3" ry="5" transform="rotate(-40 8 8)" fill="none" stroke="#555" stroke-width="1.300"/><path d="M1 1l12 12" stroke="#333"/></svg>
  <div class="input" style="left:202px;top:115px;width:305px;"></div>
  <div class="t" style="left:524px;top:119px;">Target:</div>
  <div class="input" style="left:566px;top:116px;width:74px;height:19px;background:#ececec;border-color:#808080 #fff #fff #808080;box-shadow:inset 1px 1px 0 #404040;"><div class="ddbtn dis"></div></div>
  <div class="a" style="left:0;top:143px;width:970px;height:1px;background:#fff;"></div><div class="a" style="left:0;top:144px;width:970px;height:2px;background:#d0d0d0;"></div>
  <!-- help / accessibility -->
  <div class="a" style="left:951px;top:30px;width:13px;height:13px;box-sizing:border-box;border:1.500px solid #222;border-radius:7px;background:#f6f6f6;"></div>
  <div class="t" style="left:954px;top:29px;font-weight:bold;font-size:11px;font-family:'Liberation Sans',sans-serif;">?</div>
  <svg class="a" style="left:949px;top:89px;" width="16" height="16" viewBox="0 0 16 16"><circle cx="8" cy="8" r="7.500" fill="#1450b8"/><circle cx="8" cy="4" r="1.700" fill="#fff"/><path d="M3 6.500h10M8 6.500v3M8 9l-3 4.500M8 9l3 4.500" stroke="#fff" stroke-width="1.800" fill="none" stroke-linecap="round"/></svg>
  <svg class="a" style="left:955px;top:131px;" width="12" height="12" viewBox="0 0 12 12"><path d="M11 1l-10 10M11 5l-6 6M11 9l-2 2" stroke="#999" stroke-dasharray="1 1"/></svg>
</div>
<!-- TASKBAR -->
<div id="taskbar" class="a" style="left:0;top:740px;width:1024px;height:28px;background:#d4d0c8;border-top:1px solid #d4d0c8;box-shadow:inset 0 1px 0 #fff;box-sizing:border-box;">
  <div class="tb" style="left:2px;width:52px;">
    <svg class="a" style="left:3px;top:3px;" width="16" height="15" viewBox="0 0 16 15"><path d="M1 3q3-2 6 0v4.500q-3-2-6 0z" fill="#e84a18"/><path d="M8 3q3 2 6 0v4.500q-3 2-6 0z" fill="#58b030"/><path d="M1 8.500q3-2 6 0v4.500q-3-2-6 0z" fill="#2868d8"/><path d="M8 8.500q3 2 6 0v4.500q-3 2-6 0z" fill="#f0c018"/></svg>
    <div class="t" style="left:19px;top:4px;font-weight:bold;">Start</div>
  </div>
  <div class="tb act" style="left:59px;"><div class="a" style="left:4px;top:3px;width:15px;height:15px;background:linear-gradient(160deg,#c81428,#6c0410);"></div><div class="t" style="left:6px;top:3px;font-family:'Liberation Sans',sans-serif;font-weight:bold;font-size:10px;color:#fff;">Fl</div><div class="t" style="left:24px;top:4px;font-weight:bold;letter-spacing:-.22px;">Adobe Flash CS3...</div></div>
  <div class="tb" style="left:193px;"><div class="a" style="left:4px;top:3px;width:15px;height:15px;background:linear-gradient(160deg,#3a78d0,#0c2a70);"></div><div class="t" style="left:5px;top:3px;font-family:'Liberation Sans',sans-serif;font-weight:bold;font-size:10px;color:#fff;">Ps</div><div class="t" style="left:23px;top:4px;">Adobe Photoshop ...</div></div>
  <div class="tb" style="left:327px;"><svg class="a" style="left:4px;top:3px;" width="17" height="15" viewBox="0 0 17 15"><path d="M1.500 13.500v-11h5l1.500 2h7v9z" fill="#f4d468" stroke="#a07c10"/><path d="M2 13l2-6.500h12l-2 6.500z" fill="#fae890" stroke="#a07c10" stroke-width=".8"/></svg><div class="t" style="left:23px;top:4px;letter-spacing:-.4px;">Thanks</div></div>
  <div class="tb" style="left:461px;"><svg class="a" style="left:5px;top:3px;" width="15" height="15" viewBox="0 0 15 15"><rect x=".5" y=".5" width="14" height="14" fill="#4890e0" stroke="#666"/><path d="M1 10l4-4 3 3 2-2 4 4v3h-13z" fill="#209030"/><rect x="1" y="1" width="13" height="4" fill="#80b8f0"/></svg><div class="t" style="left:23px;top:4px;">Higher Up Tree Ser...</div></div>
  <div class="tb" style="left:596px;"><svg class="a" style="left:4px;top:2px;" width="17" height="17" viewBox="0 0 17 17"><path d="M5.500 1.500h8l3 3v11h-11z" fill="#fff" stroke="#667"/><path d="M7 6h8M7 8.500h8M7 11h8M7 13.500h8" stroke="#99b"/><rect x=".5" y="3.500" width="10" height="9" fill="#2a4fa8" stroke="#14306c"/><path d="M2 5.500l1.500 5 2-4 2 4 1.500-5" fill="none" stroke="#fff" stroke-width="1.300"/></svg><div class="t" style="left:23px;top:4px;">Frogger - Microsoft...</div></div>
  <div class="tb" style="left:731px;"><svg class="a" style="left:4px;top:2px;" width="17" height="17" viewBox="0 0 17 17"><circle cx="8.500" cy="9" r="5.500" fill="none" stroke="#1c74d8" stroke-width="3"/><path d="M4 9h9" stroke="#1c74d8" stroke-width="2.200"/><rect x="9" y="10" width="6" height="2.500" fill="#d4d0c8"/><ellipse cx="8.500" cy="8" rx="8" ry="3.200" transform="rotate(-28 8.500 8)" fill="none" stroke="#e8a818" stroke-width="1.400"/></svg><div class="t" style="left:23px;top:4px;">My MSN - Microsoft...</div></div>
  <div class="a" style="left:870px;top:3px;width:151px;height:22px;box-sizing:border-box;border:1px solid;border-color:#808080 #fff #fff #808080;"></div>
  <svg class="a" style="left:872px;top:5px;" width="92" height="18" viewBox="0 0 92 18">
    <rect x="1.500" y="2.500" width="13" height="13" fill="#f4f4f4" stroke="#e0e0e0"/><circle cx="8" cy="9" r="3" fill="none" stroke="#ccc" stroke-dasharray="1 1.500" stroke-width="1.500"/>
    <circle cx="29" cy="7" r="5" fill="#cfe4fa" stroke="#3a78c8" stroke-width="1.600"/><path d="M25 11l-5 5" stroke="#2858a8" stroke-width="2.600" stroke-linecap="round"/>
    <rect x="38" y="2" width="15" height="15" fill="#fff" stroke="#000" stroke-width="1.200"/><rect x="38.500" y="2.500" width="14" height="4" fill="#e01818"/><path d="M45.500 8l4 4-4 4-4-4z" fill="#fff" stroke="#000" stroke-width="1.200"/>
    <path d="M57 2h12v8q0 4-6 6q-6-2-6-6z" fill="#e8c040" stroke="#806010"/><path d="M63 2v14" stroke="#806010"/><circle cx="67" cy="13" r="3.500" fill="#18a028" stroke="#0a5010"/>
    <path d="M74 6h4l4-3.500v13l-4-3.500h-4z" fill="#707070" stroke="#333"/><circle cx="79" cy="9" r="5" fill="none" stroke="#555" stroke-width="1.500"/><path d="M85 4q3 5 0 10" fill="none" stroke="#8890c8" stroke-width="1.400"/>
  </svg>
  <div class="t" style="left:968px;top:8px;letter-spacing:-.15px;">12:01 PM</div>
</div>
</body>
</html>
